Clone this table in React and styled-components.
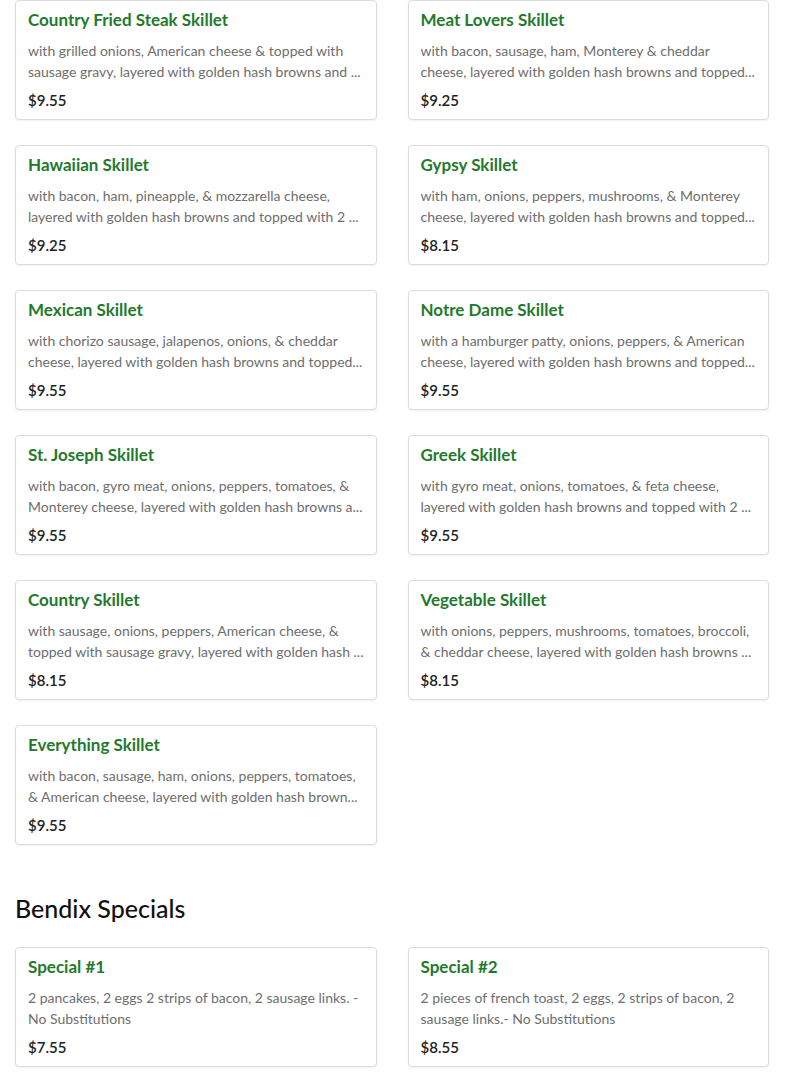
import React from "react";
import styled, { createGlobalStyle } from "styled-components";

const GlobalStyle = createGlobalStyle`
  * { box-sizing: border-box; }
  body {
    margin: 0;
    background: #fff;
    font-family: "Lato", "Noto Sans", sans-serif;
  }
`;

const Page = styled.div`
  padding: 0 16px 0 15px;
`;

const Grid = styled.div`
  display: grid;
  grid-template-columns: 1fr 1fr;
  column-gap: 31px;
  row-gap: 25px;
`;

const Card = styled.div`
  height: 120px;
  border: 1px solid #dcdcdc;
  border-radius: 4px;
  box-shadow: 0 1px 2px rgba(0, 0, 0, 0.06);
  padding: 9px 12px 10px;
  background: #fff;
`;

const Title = styled.h3`
  margin: 0 0 10px;
  font-size: 17px;
  line-height: 20px;
  font-weight: 700;
  color: #1f7a2c;
`;

const Desc = styled.p`
  margin: 0 0 8px;
  font-size: 14px;
  line-height: 21px;
  color: #6e6e6e;
  height: 42px;
  overflow: hidden;
`;

const Price = styled.div`
  font-size: 15px;
  line-height: 20px;
  font-weight: 600;
  color: #222;
`;

const SectionTitle = styled.h2`
  margin: 46px 0 22px;
  font-size: 25px;
  line-height: 34px;
  font-weight: 500;
  color: #111;
`;

const skillets = [
  ["Country Fried Steak Skillet", "with grilled onions, American cheese & topped with sausage gravy, layered with golden hash browns and ...", "$9.55"],
  ["Meat Lovers Skillet", "with bacon, sausage, ham, Monterey & cheddar cheese, layered with golden hash browns and topped...", "$9.25"],
  ["Hawaiian Skillet", "with bacon, ham, pineapple, & mozzarella cheese, layered with golden hash browns and topped with 2 ...", "$9.25"],
  ["Gypsy Skillet", "with ham, onions, peppers, mushrooms, & Monterey cheese, layered with golden hash browns and topped...", "$8.15"],
  ["Mexican Skillet", "with chorizo sausage, jalapenos, onions, & cheddar cheese, layered with golden hash browns and topped...", "$9.55"],
  ["Notre Dame Skillet", "with a hamburger patty, onions, peppers, & American cheese, layered with golden hash browns and topped...", "$9.55"],
  ["St. Joseph Skillet", "with bacon, gyro meat, onions, peppers, tomatoes, & Monterey cheese, layered with golden hash browns a...", "$9.55"],
  ["Greek Skillet", "with gyro meat, onions, tomatoes, & feta cheese, layered with golden hash browns and topped with 2 ...", "$9.55"],
  ["Country Skillet", "with sausage, onions, peppers, American cheese, & topped with sausage gravy, layered with golden hash ...", "$8.15"],
  ["Vegetable Skillet", "with onions, peppers, mushrooms, tomatoes, broccoli, & cheddar cheese, layered with golden hash browns ...", "$8.15"],
  ["Everything Skillet", "with bacon, sausage, ham, onions, peppers, tomatoes, & American cheese, layered with golden hash brown...", "$9.55"],
];

const specials = [
  ["Special #1", "2 pancakes, 2 eggs 2 strips of bacon, 2 sausage links. - No Substitutions", "$7.55"],
  ["Special #2", "2 pieces of french toast, 2 eggs, 2 strips of bacon, 2 sausage links.- No Substitutions", "$8.55"],
  ["Special #3", "2 eggs, hash browns, toast and choice of bacon or sausage.- No Substitutions", "$7.25"],
  ["Special #4", "biscuits and gravy with 2 eggs and choice of bacon or sausage.- No Substitutions", "$7.55"],
];

const MenuCard = ({ item }) => (
  <Card>
    <Title>{item[0]}</Title>
    <Desc>{item[1]}</Desc>
    <Price>{item[2]}</Price>
  </Card>
);

const App = () => {
  return (
    <Page>
      <GlobalStyle />
      <Grid>
        {skillets.map((s) => (
          <MenuCard key={s[0]} item={s} />
        ))}
      </Grid>
      <SectionTitle>Bendix Specials</SectionTitle>
      <Grid>
        {specials.map((s) => (
          <MenuCard key={s[0]} item={s} />
        ))}
      </Grid>
    </Page>
  );
};

export default App;
